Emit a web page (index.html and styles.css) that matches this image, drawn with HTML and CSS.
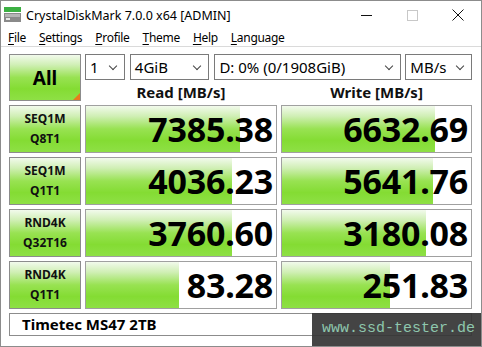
FILE: index.html
```html
<!DOCTYPE html>
<html lang="en">
<head>
    <meta charset="UTF-8">
    <title>CrystalDiskMark 7.0.0 x64 [ADMIN]</title>
    <link rel="stylesheet" href="styles.css">
</head>
<body>
    <div class="window">
        <div class="titlebar">
            <svg class="app-icon" width="17" height="16" viewBox="0 0 17 16">
                <rect x="0" y="0" width="17" height="5" fill="#3cb043"/>
                <rect x="0" y="6" width="17" height="9" fill="#8a8a8a"/>
                <rect x="1" y="7" width="15" height="3" fill="#b5b5b5"/>
                <rect x="2" y="11" width="4" height="2" fill="#e8e8e8"/>
            </svg>
            <span class="title">CrystalDiskMark 7.0.0 x64 [ADMIN]</span>
            <div class="controls">
                <span class="ctl minimize"></span>
                <span class="ctl maximize"></span>
                <span class="ctl close">
                    <svg width="12" height="12" viewBox="0 0 12 12"><path d="M0.5 0.5 L11.5 11.5 M11.5 0.5 L0.5 11.5" stroke="#111" stroke-width="1"/></svg>
                </span>
            </div>
        </div>
        <div class="menubar">
            <span class="menu-item"><u>F</u>ile</span>
            <span class="menu-item"><u>S</u>ettings</span>
            <span class="menu-item"><u>P</u>rofile</span>
            <span class="menu-item"><u>T</u>heme</span>
            <span class="menu-item"><u>H</u>elp</span>
            <span class="menu-item"><u>L</u>anguage</span>
        </div>
        <div class="content">
            <div class="board">
                <div class="btn all">All<span class="corner"></span></div>
                <div class="combos">
                    <div class="combo c-count">1</div>
                    <div class="combo c-size">4GiB</div>
                    <div class="combo c-drive">D: 0% (0/1908GiB)</div>
                    <div class="combo c-unit">MB/s</div>
                </div>
                <div class="head">Read [MB/s]</div>
                <div class="head">Write [MB/s]</div>

                <div class="btn label">SEQ1M<br>Q8T1</div>
                <div class="value"><div class="fill" style="width: 81%"></div><span>7385.38</span></div>
                <div class="value"><div class="fill" style="width: 81%"></div><span>6632.69</span></div>

                <div class="btn label">SEQ1M<br>Q1T1</div>
                <div class="value"><div class="fill" style="width: 77%"></div><span>4036.23</span></div>
                <div class="value"><div class="fill" style="width: 80%"></div><span>5641.76</span></div>

                <div class="btn label">RND4K<br>Q32T16</div>
                <div class="value"><div class="fill" style="width: 77%"></div><span>3760.60</span></div>
                <div class="value"><div class="fill" style="width: 76%"></div><span>3180.08</span></div>

                <div class="btn label">RND4K<br>Q1T1</div>
                <div class="value"><div class="fill" style="width: 49%"></div><span>83.28</span></div>
                <div class="value"><div class="fill" style="width: 57%"></div><span>251.83</span></div>

                <div class="name">Timetec MS47 2TB</div>
            </div>
        </div>
        <div class="watermark">www.ssd-tester.de</div>
    </div>
</body>
</html>
```
FILE: styles.css
```css
body {
    margin: 0;
    padding: 0;
    background-color: #ffffff;
    font-family: 'Noto Sans', 'Open Sans', sans-serif;
    color: #000;
}

.window {
    position: relative;
    width: 480px;
    height: 345px;
    border: 1px solid #8c8c8c;
    background-color: #ffffff;
    overflow: hidden;
}

.titlebar {
    display: flex;
    align-items: center;
    height: 28px;
}

.app-icon {
    margin-left: 3px;
    margin-right: 5px;
}

.title {
    font-size: 12.5px;
    color: #000;
}

.controls {
    display: flex;
    margin-left: auto;
    height: 28px;
}

.ctl {
    width: 46px;
    height: 28px;
    display: flex;
    align-items: center;
    justify-content: center;
}

.minimize::before {
    content: "";
    display: block;
    width: 11px;
    height: 1px;
    background-color: #111;
}

.maximize::before {
    content: "";
    display: block;
    width: 9px;
    height: 9px;
    border: 1px solid #c8c8c8;
}

.menubar {
    display: flex;
    height: 17px;
    align-items: center;
    padding-left: 7px;
    gap: 13px;
    font-size: 12px;
    letter-spacing: -0.3px;
    border-bottom: 1px solid #dadada;
}

.menu-item u {
    text-decoration-thickness: 1px;
    text-underline-offset: 2px;
}

.content {
    padding: 7px 8px 0 8px;
}

.board {
    display: grid;
    grid-template-columns: 72px 192px 191px;
    grid-template-rows: 26px 17px 48px 48px 48px 48px 23px;
    column-gap: 4px;
    row-gap: 4px;
}

.btn {
    border: 1px solid #8c8c8c;
    background: linear-gradient(to bottom, #f2faec 0%, #d0efb5 22%, #98e252 50%, #84dc33 75%, #8ee045 100%);
    display: flex;
    align-items: center;
    justify-content: center;
    text-align: center;
    font-weight: bold;
    box-sizing: border-box;
}

.all {
    position: relative;
    grid-row: span 2;
    font-size: 19px;
}

.corner {
    position: absolute;
    right: 0;
    bottom: 0;
    width: 0;
    height: 0;
    border-left: 7px solid transparent;
    border-bottom: 7px solid #e87a1e;
}

.label {
    font-size: 12px;
    line-height: 20px;
    color: #111;
}

.combos {
    grid-column: span 2;
    display: flex;
    gap: 5px;
}

.combo {
    position: relative;
    border: 1px solid #7a7a7a;
    background-color: #fff;
    box-sizing: border-box;
    height: 26px;
    font-size: 15px;
    line-height: 24px;
    padding-left: 4px;
}

.combo::after {
    content: "";
    position: absolute;
    right: 8px;
    top: 8px;
    width: 5px;
    height: 5px;
    border-right: 1px solid #444;
    border-bottom: 1px solid #444;
    transform: rotate(45deg);
}

.c-count { width: 40px; }
.c-size { width: 80px; }
.c-drive { width: 188px; }
.c-unit { width: 67px; margin-left: -1px; }

.head {
    font-size: 15px;
    font-weight: bold;
    text-align: center;
    line-height: 17px;
    align-self: end;
    color: #111;
}

.value {
    position: relative;
    border: 1px solid #a0a0a0;
    background-color: #fff;
    box-sizing: border-box;
    display: flex;
    align-items: center;
    justify-content: flex-end;
    padding-right: 3px;
}

.fill {
    position: absolute;
    left: 0;
    top: 0;
    bottom: 0;
    background: linear-gradient(to bottom, #f2faec 0%, #d0efb5 22%, #98e252 50%, #84dc33 75%, #8ee045 100%);
}

.value span {
    position: relative;
    font-size: 34px;
    font-weight: bold;
    line-height: 1;
    letter-spacing: -0.2px;
}

.name {
    grid-column: span 3;
    border: 1px solid #8c8c8c;
    font-size: 15px;
    font-weight: bold;
    line-height: 21px;
    padding-left: 12px;
}

.watermark {
    position: absolute;
    right: -1px;
    bottom: -1px;
    width: 170px;
    height: 34px;
    background-color: rgba(52, 52, 52, 0.92);
    color: #8ec7ad;
    font-family: 'Liberation Mono', monospace;
    font-size: 15px;
    line-height: 32px;
    padding-left: 10px;
    box-sizing: border-box;
}
```
